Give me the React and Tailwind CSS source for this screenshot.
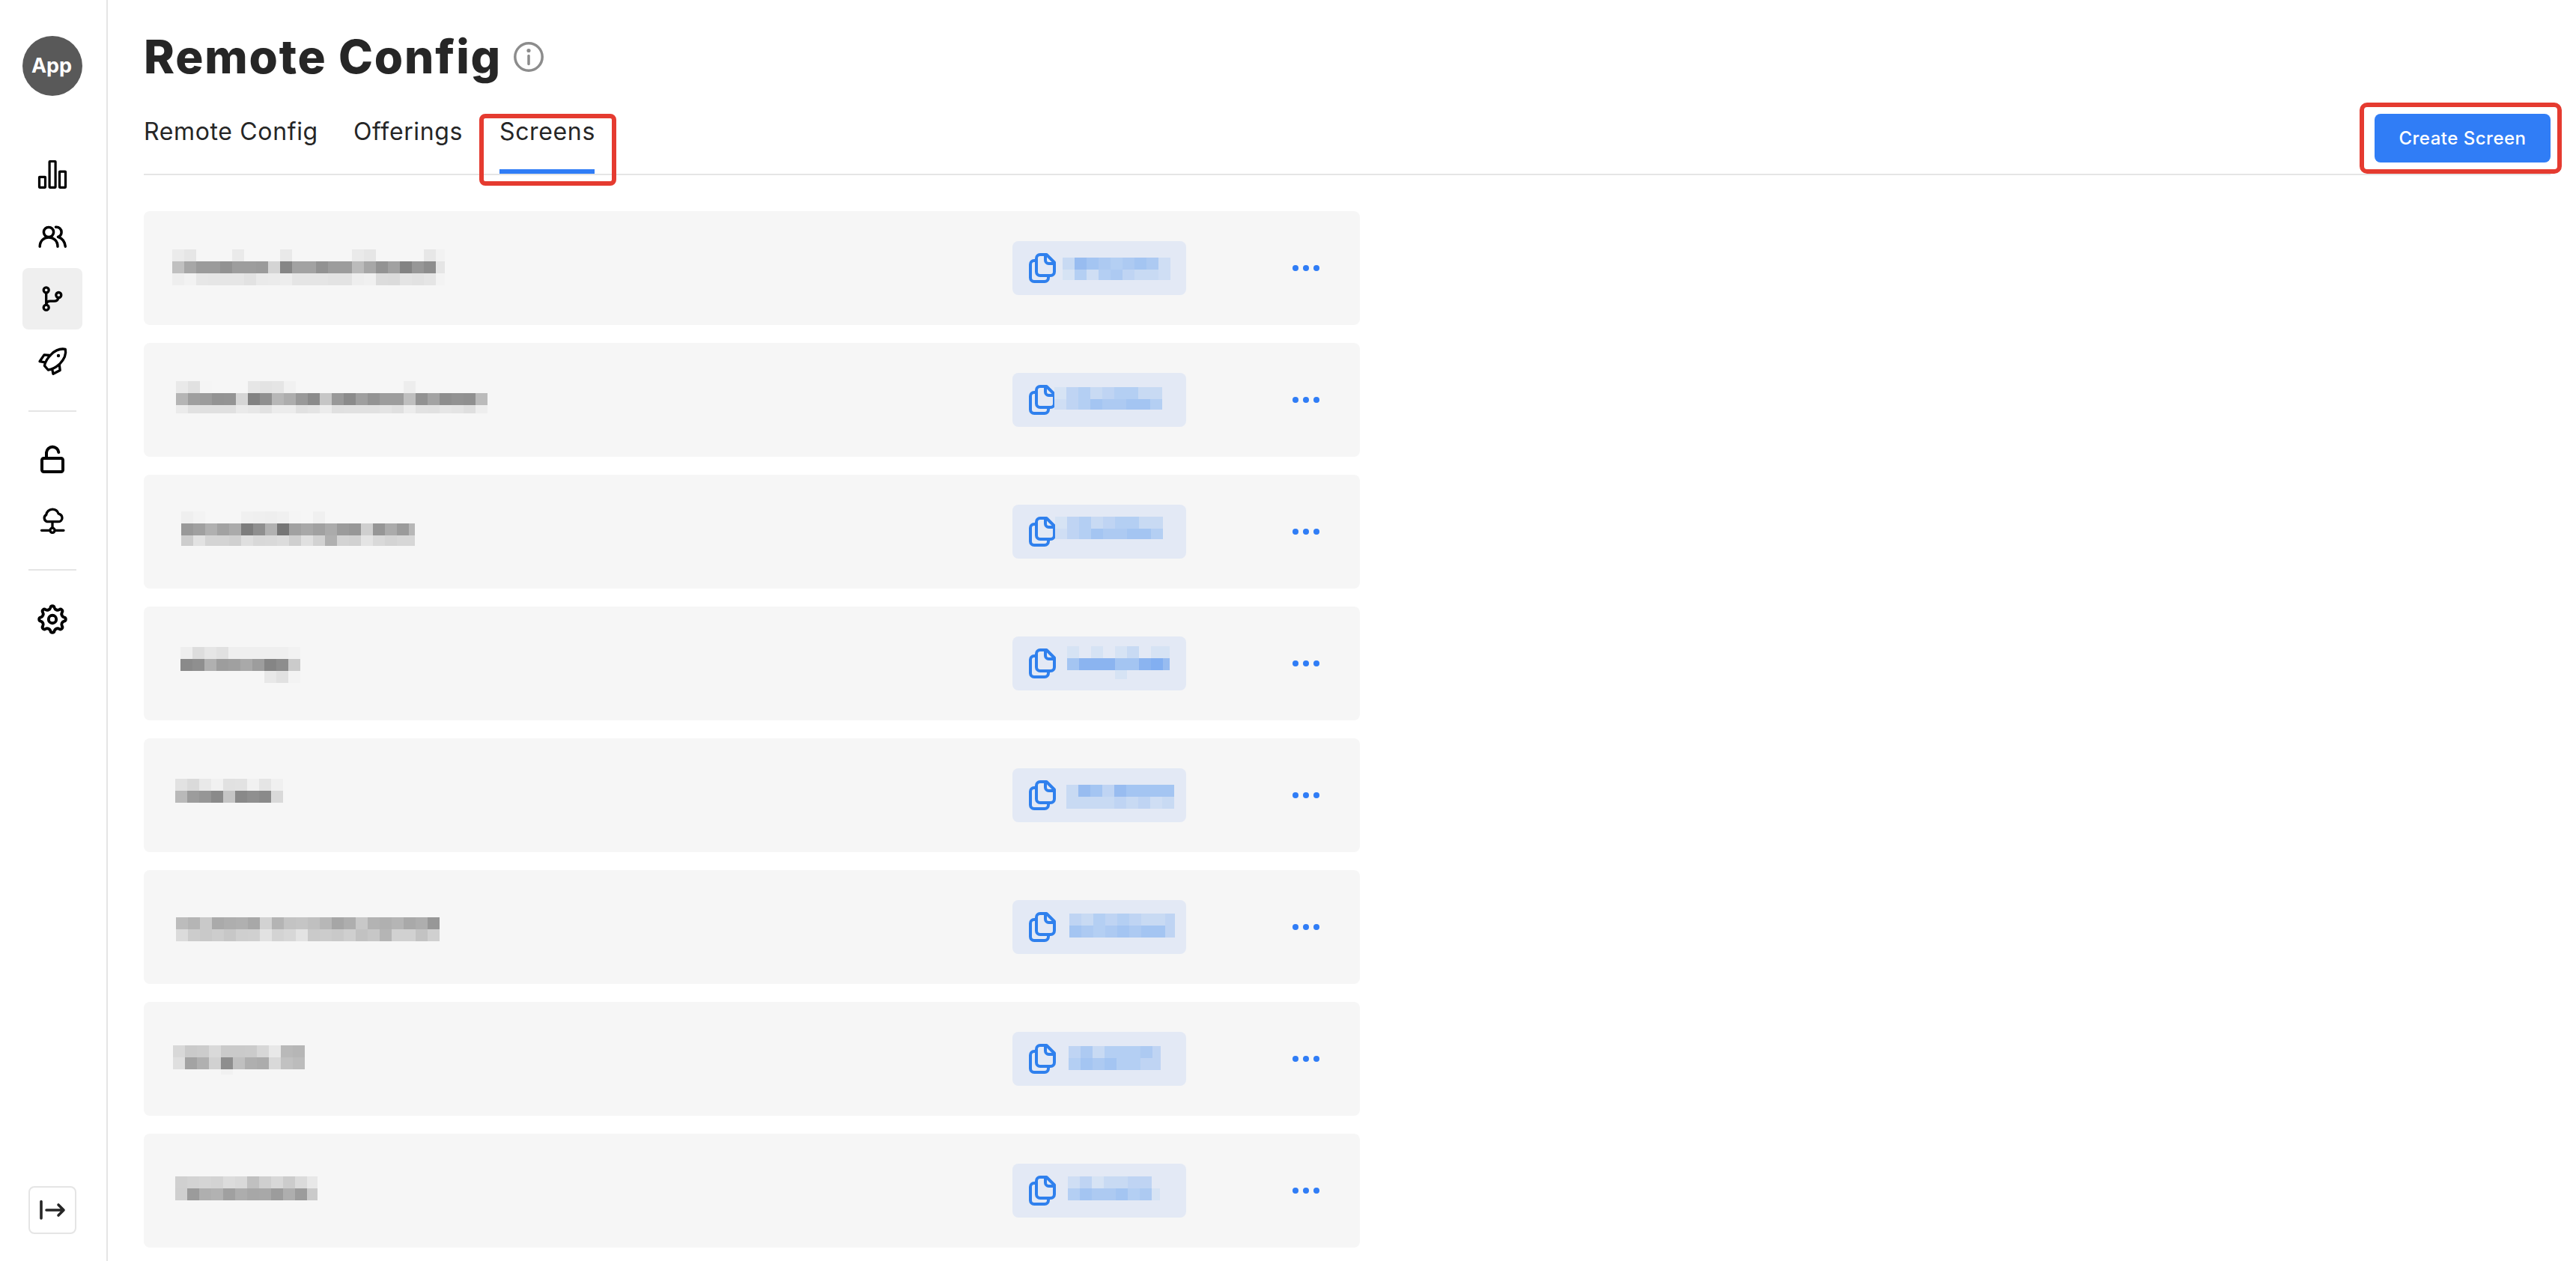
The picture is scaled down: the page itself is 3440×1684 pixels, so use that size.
import React from 'react';

const SCREENS = [
  {
    name: {
      x: 38, y: 51, last: 12, heights: [16, 16, 16],
      rows: [
        'eb e6 -- -- -- ea -- -- -- e9 -- -- -- -- -- ea e6 -- -- -- -- e7 f2',
        'c0 a7 9b 9b 92 9d 9d 9b d4 86 a2 a2 92 9c 9c bb a7 93 a1 83 97 8d e5',
        'ee f2 e7 e6 e6 e6 e2 ea eb ed e5 e5 e5 e3 e3 ee f0 dc db e4 e2 e5 f3',
      ],
    },
    id: { x: 67, y: 22, last: 16, heights: [16, 14], rows: ['c h g f e f g f b', 'a e b e f d c c b'] },
  },
  {
    name: {
      x: 43, y: 51, last: 16, heights: [16, 16, 11],
      rows: [
        'e9 e1 f5 -- -- -- e6 e3 e5 f1 -- -- -- -- -- -- -- -- -- ed -- -- -- -- -- --',
        'b5 9f 9c 93 94 d6 82 90 b7 ad 99 8b c6 99 8b 9f 93 9d 9d bf 92 a3 8e 92 90 bb',
        'eb e1 e0 e0 e0 ea e7 e2 ec ec e1 e4 ec e0 e1 e1 e1 e4 e0 ec e2 e1 e6 e4 df ee',
      ],
    },
    id: { x: 56, y: 19, last: 16, heights: [16, 14], rows: ['a d e c d e e c c', 'b d e g f f g g e'] },
  },
  {
    name: {
      x: 50, y: 49, last: 8, heights: [16, 16, 14],
      rows: [
        'ef f3 -- -- -- f0 ef ee f0 f5 -- f0 -- -- -- -- -- -- -- --',
        '99 a0 b0 a2 ab 7d 8f b1 76 a1 a8 a1 ab 9b 97 cf 96 ab 9b b7',
        'cd e2 d4 d4 d0 df d8 d9 dc cf e0 d2 b0 d3 d1 e4 d9 d4 d7 d7',
      ],
    },
    id: { x: 57, y: 16, last: 16, heights: [16, 14], rows: ['a d e c d e e c c', 'b d e g f f g g e'] },
  },
  {
    name: {
      x: 49, y: 54, last: 16, heights: [16, 16, 16],
      rows: [
        'ee dd e6 e1 ef ef ef ef ef f2',
        '8a 8f b0 9d a0 a9 9d 85 8d cb',
        '-- -- -- -- -- -- -- e8 e1 f3',
      ],
    },
    id: { x: 73, y: 13, last: 9, heights: [16, 16, 12], rows: ['a - a - a c - a a', 'g i i i g g i j h', '- - - - a - - - -'] },
  },
  {
    name: {
      x: 42, y: 54, last: 16, heights: [16, 16],
      rows: ['e2 da e9 f1 e1 e2 f1 e5 f0', 'b9 9c 96 8a c5 89 8f 8a d9'],
    },
    id: { x: 72, y: 22, last: 16, heights: [16, 16], rows: ['c h g d h g g g g', 'c c c c d c d b c'] },
  },
  {
    name: {
      x: 43, y: 63, last: 16, heights: [16, 16],
      rows: [
        'bc b5 c9 aa ae b0 a8 d2 b4 c3 c5 c0 b7 a6 ae c8 b3 b0 b5 a9 ae 97',
        'db cc c9 cd c7 cf d0 e2 d3 d7 e3 ca cc c9 cf c2 c7 b5 d1 d1 c3 d0',
      ],
    },
    id: { x: 76, y: 18, last: 13, heights: [16, 16], rows: ['d c e d e d c c d', 'g f e f g f g g d'] },
  },
  {
    name: {
      x: 39, y: 58, last: 16, heights: [16, 16, 7],
      rows: [
        'd8 ca cc d9 ca ca cb d7 e8 b9 b6',
        'df a3 b0 d1 8e c0 af ac d9 c1 bc',
        '-- -- -- -- f1 -- -- -- -- -- --',
      ],
    },
    id: { x: 75, y: 19, last: 11, heights: [16, 16], rows: ['d f c e e e f d', 'e g f g e e d d'] },
  },
  {
    name: {
      x: 42, y: 57, last: 14, heights: [16, 16],
      rows: ['d0 d3 d5 d3 dc d9 c0 cf d8 cc db e8', 'cf 9b af b2 a0 ad a7 a8 9c ae 9c ca'],
    },
    id: { x: 74, y: 17, last: 11, heights: [16, 16], rows: ['b d a c c d d -', 'e g f f g e f a'] },
  },
];

const BLUES = {
  a: '#d6e3f4',
  b: '#cfdef4',
  c: '#c8daf3',
  d: '#bfd4f3',
  e: '#b4cff3',
  f: '#adcaf2',
  g: '#a4c5f2',
  h: '#98bcf0',
  i: '#8bb4f0',
  j: '#82aff1',
};

function cellColor(code) {
  if (code.startsWith('-')) return 'transparent';
  return BLUES[code] || `#${code}${code}${code}`;
}

// Masked text: a coarse mosaic, 16px per cell
function Mosaic({ data }) {
  return (
    <div className="shrink-0" style={{ marginTop: data.y }}>
      {data.rows.map((row, r) => {
        const cells = row.split(' ');
        return (
          <div key={r} className="flex" style={{ height: data.heights[r] }}>
            {cells.map((code, i) => (
              <div
                key={i}
                className="h-full shrink-0"
                style={{ width: i === cells.length - 1 ? data.last : 16, backgroundColor: cellColor(code) }}
              />
            ))}
          </div>
        );
      })}
    </div>
  );
}

function Icon({ children, width = 3.5 }) {
  return (
    <svg
      className="w-12 h-12"
      viewBox="0 0 48 48"
      fill="none"
      stroke="#000"
      strokeWidth={width}
      strokeLinecap="round"
      strokeLinejoin="round"
    >
      {children}
    </svg>
  );
}

function gearPath() {
  const pt = (deg) => {
    const a = (deg * Math.PI) / 180;
    return `${(24 + 15.8 * Math.sin(a)).toFixed(2)} ${(24 - 15.8 * Math.cos(a)).toFixed(2)}`;
  };
  let d = `M${pt(-9.5)}`;
  for (let k = 0; k < 8; k++) {
    d += `A2.65 2.65 0 0 1 ${pt(k * 45 + 9.5)}A4.5 4.5 0 0 0 ${pt(k * 45 + 35.5)}`;
  }
  return `${d}Z`;
}

function NavItem({ active, children }) {
  return (
    <div className={`w-20 h-[82px] rounded-lg flex items-center justify-center ${active ? 'bg-[#efefef]' : ''}`}>
      {children}
    </div>
  );
}

function Sidebar() {
  return (
    <aside className="w-36 shrink-0 border-r-2 border-[#e5e5e5] pl-[30px] flex flex-col">
      <div className="mt-12 w-20 h-20 rounded-full bg-[#595959] text-white text-[27px] font-bold flex items-center justify-center">
        <span className="-ml-0.5">App</span>
      </div>
      <nav className="mt-[66px]">
        <NavItem>
          <Icon width={3.2}>
            <rect x="6.5" y="25.3" width="8" height="14" rx="0.5" />
            <rect x="20.1" y="4.5" width="8" height="34.8" rx="0.5" />
            <rect x="33.5" y="18.1" width="8" height="21.2" rx="0.5" />
          </Icon>
        </NavItem>
        <NavItem>
          <Icon>
            <circle cx="19" cy="17" r="6.6" />
            <path d="M7.2 36.2C7.2 29 12.4 23.9 19 23.9S31 29 31 36.2" />
            <path d="M28.5 10.2c4.5-.3 7.6 2.8 7.6 6.8 0 3-1.5 5.2-4.6 6.3 6 2 9.2 6.8 9.8 12.9" />
          </Icon>
        </NavItem>
        <NavItem active>
          <Icon width={3.3}>
            <circle cx="15.7" cy="12.3" r="3.5" />
            <circle cx="15.7" cy="35.7" r="3.5" />
            <circle cx="32.3" cy="19" r="3.5" />
            <path d="M15.7 16v16M32 22.7c-.8 3-2.5 4.5-5.5 4.5h-5.5c-3 0-4.8 1.5-5.3 4.5" />
          </Icon>
        </NavItem>
        <NavItem>
          <Icon width={3.3}>
            <path d="M41.3 9.3C35.5 8.3 28.5 10 22.3 16.3 18 20.5 14.5 25.5 13.4 31.3L18.3 37C24 36.2 29 33.5 33.5 29.3 39.5 23 42.8 16 41.3 9.3Z" />
            <path d="M20 17.5L13 16.9 7 25.7 13.8 26.8M33.3 30.5L34.2 37.5 25 42.3 23.7 36" />
            <circle cx="32" cy="18" r="2.2" fill="#000" stroke="none" />
          </Icon>
        </NavItem>
      </nav>
      <div className="mt-[26px] ml-2 w-16 h-0.5 bg-[#e5e5e5]" />
      <div className="mt-6">
        <NavItem>
          <Icon width={4}>
            <rect x="10" y="21" width="28" height="18" rx="2.5" />
            <path d="M16 20V13.2a8.2 8.2 0 0 1 16.3-.2" />
          </Icon>
        </NavItem>
        <NavItem>
          <Icon width={3.3}>
            <path d="M17 23.7a5 5 0 0 1-1.3-9.2c.5-4.3 4-7.4 8.3-7.4 4 0 6.9 2.3 8 5.7 3 .9 5 3.1 5 5.9 0 2.8-2.3 5-5.5 5z" />
            <path d="M24 24v8M9.5 35.3h11M27.5 35.3h11.5" />
            <circle cx="24" cy="35.3" r="3.1" />
          </Icon>
        </NavItem>
      </div>
      <div className="mt-[22px] ml-2 w-16 h-0.5 bg-[#e5e5e5]" />
      <div className="mt-6">
        <NavItem>
          <Icon width={3.9}>
            <path d={gearPath()} />
            <circle cx="24" cy="24" r="5.2" />
          </Icon>
        </NavItem>
      </div>
      <button className="mt-auto mb-9 ml-2 w-16 h-16 rounded-lg border-2 border-[#e5e5e5] flex items-center justify-center">
        <svg
          className="w-10 h-10"
          viewBox="0 0 40 40"
          fill="none"
          stroke="#262626"
          strokeWidth="3.6"
          strokeLinecap="round"
          strokeLinejoin="round"
        >
          <path d="M5 8.5v22.5M12 20h22.5M28 13l7 7-7 7" />
        </svg>
      </button>
    </aside>
  );
}

function CopyIcon() {
  return (
    <svg
      className="ml-[22px] mt-4 w-9 h-10 shrink-0"
      viewBox="0 0 36 40"
      fill="none"
      stroke="#2f80ed"
      strokeWidth="4"
      strokeLinejoin="round"
    >
      <path d="M23.5 2H15a5 5 0 0 0-5 5v18a5 5 0 0 0 5 5h14a5 5 0 0 0 5-5V12.5z" />
      <path d="M22 3v6.5a4.5 4.5 0 0 0 4.5 4.5H33" />
      <path d="M9 10H7a5 5 0 0 0-5 5v18a5 5 0 0 0 5 5h14a5 5 0 0 0 5-5v-2" />
    </svg>
  );
}

function ScreenRow({ screen }) {
  return (
    <div className="w-[1624px] h-[152px] rounded-lg bg-[#f6f6f6] flex items-start">
      <div className="w-[1160px] shrink-0 flex" style={{ paddingLeft: screen.name.x }}>
        <Mosaic data={screen.name} />
      </div>
      <div className="mt-10 w-[232px] h-[72px] shrink-0 rounded-lg bg-[#e3e9f5] flex items-start">
        <CopyIcon />
        {/* 58px = icon plus its left inset */}
        <div style={{ marginLeft: screen.id.x - 58 }}>
          <Mosaic data={screen.id} />
        </div>
      </div>
      <div className="ml-[142px] mt-[72px] flex gap-1.5">
        <span className="w-2 h-2 rounded-full bg-[#307df6]" />
        <span className="w-2 h-2 rounded-full bg-[#307df6]" />
        <span className="w-2 h-2 rounded-full bg-[#307df6]" />
      </div>
    </div>
  );
}

export default function App() {
  return (
    <div className="w-[3440px] h-[1684px] overflow-hidden bg-white flex font-['Inter',sans-serif] text-[#262626]">
      <Sidebar />
      <main className="flex-1 pl-12 pr-[34px]">
        <header className="h-[234px] border-b-2 border-[#e5e5e5] flex justify-between">
          <div className="flex flex-col">
            <div className="mt-9 h-20 flex items-center">
              <h1 className="w-[474px] text-[62px] leading-[80px] font-extrabold tracking-[1.8px] whitespace-nowrap">
                Remote Config
              </h1>
              <svg className="ml-5 w-10 h-10" viewBox="0 0 40 40" fill="none" stroke="#8c8c8c" strokeWidth="3.5">
                <circle cx="20" cy="20" r="18.2" />
                <path d="M20 18.5v11" strokeLinecap="round" />
                <circle cx="20" cy="11.5" r="2.6" fill="#8c8c8c" stroke="none" />
              </svg>
            </div>
            <div className="mt-auto flex gap-12 text-[32px] leading-[40px] tracking-[0.64px] whitespace-nowrap">
              <div className="w-[232px] h-[76px]">Remote Config</div>
              <div className="w-[147px] h-[76px]">Offerings</div>
              <div className="relative w-[127px] h-[76px] border-b-[6px] border-[#307df6]">
                Screens
                <div className="absolute -left-[27px] -top-[4px] w-[183px] h-[96px] rounded-lg border-[6px] border-[#e53b30]" />
              </div>
            </div>
          </div>
          <button className="relative mt-[152px] w-[235px] h-[65px] rounded-lg bg-[#307df6] text-white text-2xl font-medium tracking-[0.5px]">
            Create Screen
            <span className="absolute -left-5 -top-[15px] w-[270px] h-[95px] rounded-[10px] border-[6px] border-[#e53b30]" />
          </button>
        </header>
        <div className="mt-12 flex flex-col gap-6">
          {SCREENS.map((screen, i) => (
            <ScreenRow key={i} screen={screen} />
          ))}
        </div>
      </main>
    </div>
  );
}
